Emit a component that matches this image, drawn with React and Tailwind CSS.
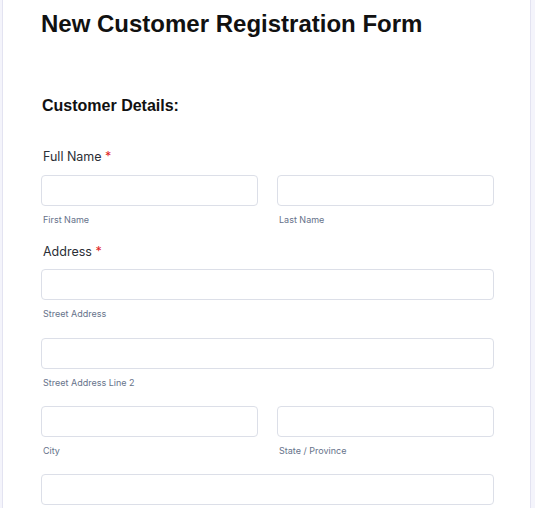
export default function App() {
  const inter = { fontFamily: "Inter, 'Noto Sans', sans-serif" };
  const Input = ({ className = "" }) => (
    <div className={"h-[31px] rounded-[4px] border border-[#dcdfe8] bg-white " + className} />
  );
  const Sub = ({ children }) => (
    <div className="mt-[8px] pl-[2px] text-[9px] leading-[12px] text-[#66728a]" style={inter}>{children}</div>
  );
  const Label = ({ children }) => (
    <div className="text-[12.5px] leading-[18px] text-[#2b2f36] pl-[2px]" style={inter}>
      {children} <span className="text-[#e02424]">*</span>
    </div>
  );
  return (
    <div className="w-[535px] h-[508px] overflow-hidden bg-[#f4f4fb]">
      <div className="ml-[2px] w-[529px] h-full bg-white border-l border-r border-[#e3e3f1]">
        <div className="pl-[38px] pr-[36px]">
          <h1
            className="pt-[10px] text-[24px] leading-[28px] font-bold text-[#111111]"
            style={{ fontFamily: "'Liberation Sans', Arial, sans-serif" }}
          >
            New Customer Registration Form
          </h1>
          <h2
            className="mt-[58px] pl-[1px] text-[16px] leading-[20px] text-[#111111]"
            style={{ fontFamily: "'Liberation Sans', Arial, sans-serif", fontWeight: 600 }}
          >
            Customer Details:
          </h2>
          <div className="mt-[32px]">
            <Label>Full Name</Label>
            <div className="mt-[9px] grid grid-cols-2 gap-x-[19px]">
              <div>
                <Input />
                <Sub>First Name</Sub>
              </div>
              <div>
                <Input />
                <Sub>Last Name</Sub>
              </div>
            </div>
          </div>
          <div className="mt-[17px]">
            <Label>Address</Label>
            <div className="mt-[8px]">
              <Input />
              <Sub>Street Address</Sub>
            </div>
            <div className="mt-[18px]">
              <Input />
              <Sub>Street Address Line 2</Sub>
            </div>
            <div className="mt-[17px] grid grid-cols-2 gap-x-[19px]">
              <div>
                <Input />
                <Sub>City</Sub>
              </div>
              <div>
                <Input />
                <Sub>State / Province</Sub>
              </div>
            </div>
            <div className="mt-[17px]">
              <Input />
            </div>
          </div>
        </div>
      </div>
    </div>
  );
}
